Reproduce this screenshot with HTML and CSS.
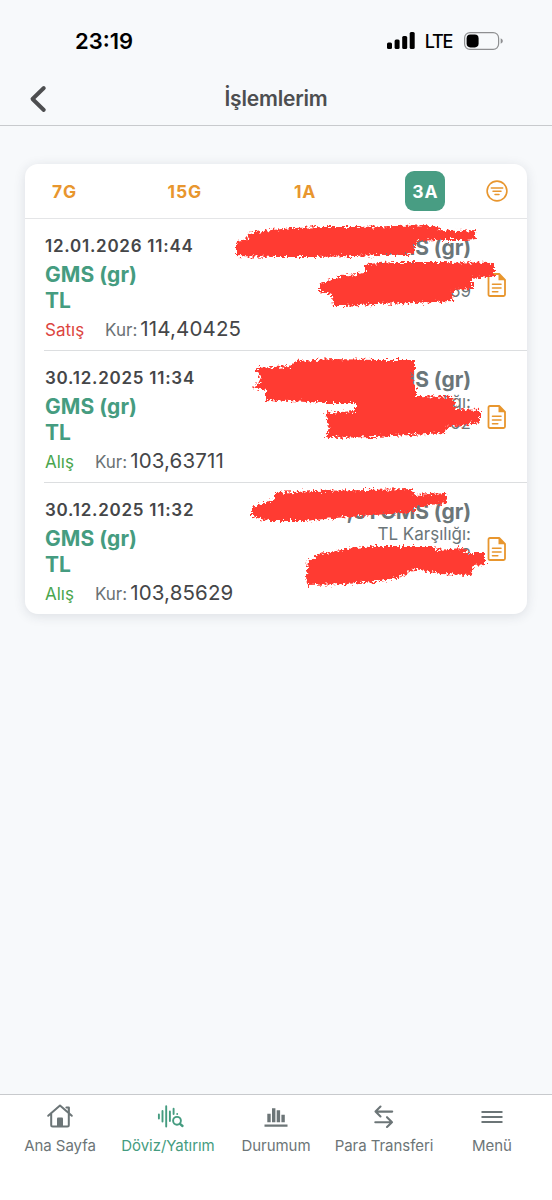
FILE: index.html
```html
<!DOCTYPE html>
<html lang="tr">
<head>
<meta charset="utf-8">
<title>İşlemlerim</title>
<link rel="stylesheet" href="styles.css">
</head>
<body>
<svg class="defs" width="0" height="0" aria-hidden="true">
  <defs>
    <filter id="rough" x="-10%" y="-20%" width="120%" height="140%">
      <feTurbulence type="fractalNoise" baseFrequency="0.4" numOctaves="2" seed="4" result="n"/>
      <feDisplacementMap in="SourceGraphic" in2="n" scale="9" xChannelSelector="R" yChannelSelector="G"/>
      <feGaussianBlur stdDeviation="0.6"/>
    </filter>
    <symbol id="doc" viewBox="0 0 20 26">
      <path d="M3 2H12.200L18 8V22.500Q18 24 16.500 24H3Q1.500 24 1.500 22.500V3.500Q1.500 2 3 2Z" fill="none" stroke="currentColor" stroke-width="1.800" stroke-linejoin="round"/>
      <path d="M11.500 1.500V8.200H18.200Z" fill="currentColor"/>
      <path d="M5.500 12.300H14M5.500 16H14M5.500 19.800H10.800" stroke="currentColor" stroke-width="1.600" stroke-linecap="round"/>
    </symbol>
  </defs>
</svg>
<div class="screen">
  <div class="status">
    <span class="clock">23:19</span>
    <div class="signals">
      <svg class="bars" width="28" height="18" viewBox="0 0 28 18"><rect x="0" y="10.500" width="5" height="6.500" rx="1.500"/><rect x="7.600" y="7.500" width="5" height="9.500" rx="1.500"/><rect x="15.200" y="4" width="5" height="13" rx="1.500"/><rect x="22.700" y="0" width="5" height="17" rx="1.500"/></svg>
      <span class="lte">LTE</span>
      <svg class="battery" width="40" height="18" viewBox="0 0 40 18"><rect x=".6" y=".6" width="34" height="16.800" rx="5.400" fill="none" stroke="#8e8f91" stroke-width="1.200"/><rect x="2.600" y="2.600" width="12" height="12.800" rx="3.800"/><path d="M36.700 6.200Q38.900 7.200 38.900 9T36.700 11.800Z" fill="#8e8f91"/></svg>
    </div>
  </div>
  <header class="topbar">
    <svg class="back" width="20" height="30" viewBox="0 0 20 30"><path d="M15.800 4L4.500 15L15.800 26" fill="none" stroke="currentColor" stroke-width="3.900" stroke-linecap="round" stroke-linejoin="round"/></svg>
    <h1>İşlemlerim</h1>
  </header>

  <main class="content">
    <section class="card">
      <div class="tabs">
        <span class="tab">7G</span><span class="tab">15G</span><span class="tab">1A</span><span class="tab active">3A</span>
        <svg class="filter" width="22" height="22" viewBox="0 0 22 22" fill="none" stroke="currentColor" stroke-linecap="round"><circle cx="11" cy="11" r="9.900" stroke-width="1.600"/><path d="M5.300 8H16.700M7 11.200H15M9 14.500H13" stroke-width="1.500"/></svg>
      </div>

      <article class="row">
        <div class="left">
          <div class="date">12.01.2026 11:44</div>
          <div class="asset">GMS (gr)</div>
          <div class="asset">TL</div>
          <div class="rate"><span class="sell">Satış</span><span class="label">Kur:</span><span class="value">114,40425</span></div>
        </div>
        <div class="right">
          <div class="amount">GMS (gr)</div>
          <div class="equiv">TL Karşılığı:</div>
          <div class="equiv">69</div>
        </div>
        <svg class="doc"><use href="#doc"/></svg>
        <svg class="marker" viewBox="200 219 302 131"><path filter="url(#rough)" d="M211 242L222 240L223 233L246 230L270 228L300 227L330 227L370 226L412 225L414 230L432 231L450 230L451 239L440 240L415 240L390 241L390 252L385 255L355 255L330 256L290 257L250 257L211 256Z"/><path filter="url(#rough)" d="M295 284L315 276L340 273L340 264L370 262L420 262L469 263L469 276L447 279L447 289L428 290L427 301L390 303L350 304L320 306L308 306L307 295L295 292Z"/></svg>
      </article>

      <article class="row">
        <div class="left">
          <div class="date">30.12.2025 11:34</div>
          <div class="asset">GMS (gr)</div>
          <div class="asset">TL</div>
          <div class="rate"><span class="buy">Alış</span><span class="label">Kur:</span><span class="value">103,63711</span></div>
        </div>
        <div class="right">
          <div class="amount">GMS (gr)</div>
          <div class="equiv">TL Karşılığı:</div>
          <div class="equiv">62</div>
        </div>
        <svg class="doc"><use href="#doc"/></svg>
        <svg class="marker" viewBox="200 351 302 131"><path filter="url(#rough)" d="M231 368L265 366L270 361L310 359L350 360L390 360L390 372L386 374L391 390L391 396L428 397L431 409L455 410L455 422L440 425L422 427L421 433L385 435L350 437L301 438L304 427L301 413L330 411L330 403L300 403L265 401L241 400L241 390L228 388L236 380Z"/></svg>
      </article>

      <article class="row">
        <div class="left">
          <div class="date">30.12.2025 11:32</div>
          <div class="asset">GMS (gr)</div>
          <div class="asset">TL</div>
          <div class="rate"><span class="buy">Alış</span><span class="label">Kur:</span><span class="value">103,85629</span></div>
        </div>
        <div class="right">
          <div class="amount">,61 GMS (gr)</div>
          <div class="equiv">TL Karşılığı:</div>
          <div class="equiv">2</div>
        </div>
        <svg class="doc"><use href="#doc"/></svg>
        <svg class="marker" viewBox="200 483 302 131"><path filter="url(#rough)" d="M227 507L250 499L250 493L290 491L340 490L387 489L390 495L421 493L422 503L390 507L390 512L350 515L310 518L280 521L245 521L227 517Z"/><path filter="url(#rough)" d="M283 561L295 554L320 549L350 546L408 546L412 550L438 548L442 553L460 553L460 565L448 566L446 575L415 574L390 569L375 577L350 582L320 584L282 585L281 575Z"/></svg>
      </article>
    </section>
  </main>

  <nav class="nav">
    <a class="item">
      <svg width="28" height="26" viewBox="0 0 28 26" fill="none" stroke="currentColor" stroke-width="2" stroke-linecap="round" stroke-linejoin="round"><path d="M2.200 12.800L14 2.500L25.800 12.800M5.200 11V22Q5.200 23.500 6.700 23.500H21.300Q22.800 23.500 22.800 22V11"/><path d="M20.500 4.500H22.800V9.500" stroke-width="2.200"/><path d="M11 15.500Q11 14.500 12 14.500H16Q17 14.500 17 15.500V24H11Z" fill="currentColor" stroke="none"/></svg>
      <span>Ana Sayfa</span>
    </a>
    <a class="item current">
      <svg class="pulse" width="28" height="26" viewBox="0 0 28 26" fill="none" stroke="currentColor" stroke-width="1.900" stroke-linecap="round"><path d="M1.900 11.500V15.500M5.500 8V18.500M9.200 3.300V23.500M12.900 8.500V18M16.600 5.800V11M20.200 11V10.900"/><circle cx="20" cy="17.800" r="3.900"/><path d="M23 20.800L25.500 23" stroke-width="2.400"/></svg>
      <span>Döviz/Yatırım</span>
    </a>
    <a class="item">
      <svg width="28" height="26" viewBox="0 0 28 26"><path d="M2.500 21.500h23v2.200h-23zM5.300 10.800h3.400v8.400h-3.400zM10 5.200h3.400v14h-3.400zM14.700 7.300h3.400v11.900h-3.400zM19.400 11.800h3.400v7.400h-3.400z" fill="currentColor"/></svg>
      <span>Durumum</span>
    </a>
    <a class="item">
      <svg width="28" height="26" viewBox="0 0 28 26" fill="none" stroke="currentColor" stroke-width="2.100" stroke-linecap="round" stroke-linejoin="round"><path d="M22.200 8.600H5.500M10.500 3.600L5.500 8.600L10.500 13.500M5.300 19.200H22M17 14.200L22 19.200L17 24"/></svg>
      <span>Para Transferi</span>
    </a>
    <a class="item">
      <svg width="28" height="26" viewBox="0 0 28 26" stroke="currentColor" stroke-width="2.100" stroke-linecap="round"><path d="M4.300 9H23.700M4.300 14H23.700M4.300 19H23.700"/></svg>
      <span>Menü</span>
    </a>
  </nav>
</div>
</body>
</html>
```

FILE: styles.css
```css
* { box-sizing: border-box; }
body { margin: 0; background: #fff; font-family: Inter, "Liberation Sans", sans-serif; }
.defs { position: absolute; }
.screen { width: 552px; height: 1200px; display: flex; flex-direction: column; background: #f7f9fb; overflow: hidden; }

.status { height: 72px; padding: 10px 48px 0 75px; display: flex; align-items: center; justify-content: space-between; flex: none; color: #000; }
.clock { font-size: 22px; font-weight: 600; line-height: 62px; letter-spacing: 0; }
.signals { display: flex; align-items: center; }
.lte { font-size: 18px; font-weight: 500; letter-spacing: -1.300px; margin: 1px 12px 0 10px; }

.topbar { height: 54px; flex: none; display: grid; grid-template-columns: 50px 1fr 50px; align-items: center; padding: 0 28px; border-bottom: 1px solid #c8cacd; color: #4d4e50; }
.back { margin-top: 1px; }
h1 { margin: 0; font-size: 21px; font-weight: 600; line-height: 30px; text-align: center; letter-spacing: -.2px; }

.content { flex: 1; padding: 38px 25px; }
.card { background: #fff; border-radius: 13px; box-shadow: 0 2px 12px rgba(40,50,70,.13); height: 450px; }
.tabs { height: 55px; display: flex; align-items: center; gap: 80.300px; padding: 0 19px; border-bottom: 1.500px solid #e4e5e7; color: #e8962e; }
.tab { width: 40px; height: 40px; line-height: 41px; flex: none; display: flex; justify-content: center; font-size: 17.500px; font-weight: 700; letter-spacing: .9px; text-indent: 1px; white-space: nowrap; }
.active { background: #489d83; color: #fff; border-radius: 9px; }
.filter { flex: none; margin-left: -39px; }

.row { position: relative; height: 132px; display: flex; padding: 16px 19px 0 20px; }
.row + .row::before { content: ""; position: absolute; left: 19px; right: 0; top: -1px; height: 1px; background: #dcdee0; }
.left { flex: none; width: 215px; }
.date { font-size: 17px; line-height: 20px; font-weight: 600; color: #454648; margin: 1px 0 6px; letter-spacing: .75px; }
.asset { font-size: 21px; line-height: 25px; font-weight: 700; color: #459c80; letter-spacing: .05px; }
.asset + .asset { padding-top: 1px; }
.rate { display: flex; align-items: baseline; margin-top: 3px; height: 26px; line-height: 26px; white-space: nowrap; font-size: 17px; }
.sell { color: #dc4540; margin-right: 21px; }
.buy { color: #4aa64e; margin-right: 21px; }
.label { color: #6b7275; margin-right: 3px; font-weight: 400; }
.value { color: #454648; font-size: 20.500px; letter-spacing: .15px; }
.right { flex: 1; text-align: right; padding-right: 17px; color: #6b7679; }
.amount { font-size: 21px; line-height: 25px; font-weight: 700; letter-spacing: -.1px; }
.equiv { font-size: 17px; line-height: 21px; }
.doc { flex: none; width: 20px; height: 26px; margin: 37px 1px 0 -1px; color: #e8962e; }
.marker { position: absolute; left: 199px; top: 0; width: 302px; height: 131px; overflow: visible; fill: #ff3a30; }
.marker { left: 200px; }

.nav { flex: none; height: 106px; border-top: 1.500px solid #c8cacd; background: #fff; display: grid; grid-template-columns: repeat(5, 1fr); padding: 8px 6px 0; color: #6c7577; }
.item { display: flex; flex-direction: column; align-items: center; white-space: nowrap; }
.item span { font-size: 15px; line-height: 20px; margin-top: 7px; letter-spacing: -.05px; }
.pulse { position: relative; left: 3px; }
.current { color: #459c80; }
```
